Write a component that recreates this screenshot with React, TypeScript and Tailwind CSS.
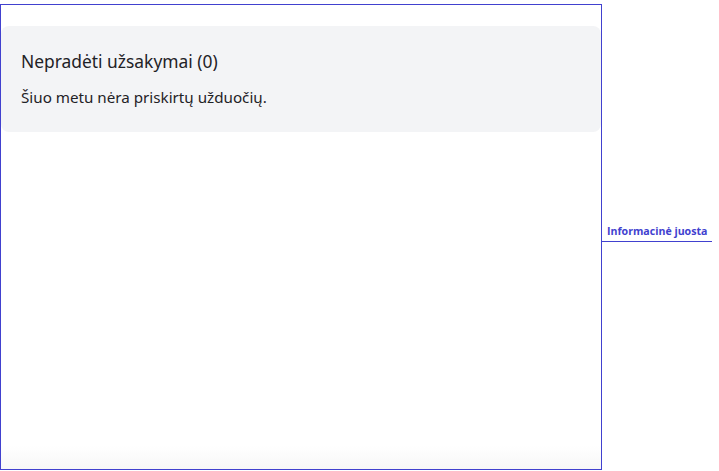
export default function App() {
  return (
    <div className="flex h-[471px] w-[719px] items-start bg-white font-['Noto_Sans',sans-serif]">
      <main className="mt-[4px] h-[466px] w-[602px] border border-[#4141cf] bg-gradient-to-b from-white from-95% to-[#f7f7f7] pt-[21px]">
        <section className="rounded-lg bg-[#f3f4f6] px-[20px] pb-[22px] pt-[20px]">
          <h2 className="text-[17.4px] leading-[30px] text-[#1f2226]">Nepradėti užsakymai (0)</h2>
          <p className="mt-[8px] text-[15.2px] leading-[26px] text-[#1f2226]">Šiuo metu nėra priskirtų užduočių.</p>
        </section>
      </main>
      <aside className="mt-[222px] w-[110px]">
        <div className="border-b border-[#4141cf] pb-[1px] pl-[5px] text-[10.6px] font-bold leading-[18px] text-[#4141cf] font-['Open_Sans',sans-serif]">
          Informacinė juosta
        </div>
      </aside>
    </div>
  );
}
